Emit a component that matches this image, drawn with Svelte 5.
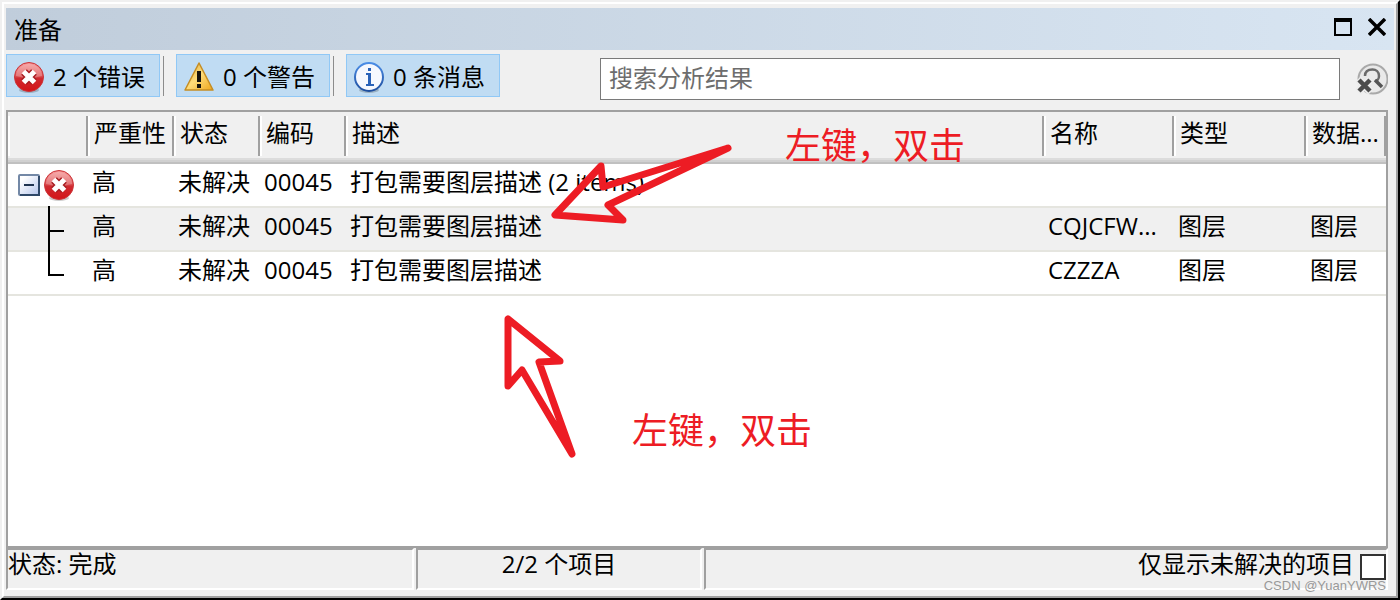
<script>
  let search = "";
  let onlyUnresolved = false;
  let expanded = true;

  const filters = [
    { icon: "error", label: "2 个错误" },
    { icon: "warning", label: "0 个警告" },
    { icon: "info", label: "0 条消息" }
  ];

  const columns = ["", "严重性", "状态", "编码", "描述", "名称", "类型", "数据..."];

  const group = { severity: "高", status: "未解决", code: "00045", text: "打包需要图层描述 (2 items)" };

  const items = [
    { severity: "高", status: "未解决", code: "00045", text: "打包需要图层描述", name: "CQJCFW...", type: "图层", data: "图层" },
    { severity: "高", status: "未解决", code: "00045", text: "打包需要图层描述", name: "CZZZA", type: "图层", data: "图层" }
  ];
</script>

{#snippet icon(name)}
  {#if name === "error"}
    <svg class="icon" viewBox="0 0 32 32" aria-hidden="true">
      <defs>
        <linearGradient id="red" x1="0" y1="0" x2="0" y2="1">
          <stop offset="0" stop-color="#f79a9a" />
          <stop offset="0.45" stop-color="#dd5558" />
          <stop offset="0.55" stop-color="#cf2a30" />
          <stop offset="1" stop-color="#d41418" />
        </linearGradient>
      </defs>
      <ellipse cx="16" cy="29" rx="10" ry="3" fill="#000" opacity="0.2" />
      <circle cx="16" cy="16" r="14.5" fill="url(#red)" stroke="#cc3438" />
      <path d="M3 15a13 12 0 0 1 26 0q-13 4-26 0z" fill="#fff" opacity="0.22" />
      <path d="M11 11l10 10M21 11L11 21" stroke="#a81d22" stroke-width="8" />
      <path d="M10.5 10.5l11 11M21.500 10.500l-11 11" stroke="#fff" stroke-width="5" />
    </svg>
  {:else if name === "warning"}
    <svg class="icon" viewBox="0 0 32 32" aria-hidden="true">
      <defs>
        <linearGradient id="gold" x1="0" y1="0" x2="1" y2="1">
          <stop offset="0" stop-color="#d8a83c" />
          <stop offset="0.5" stop-color="#ffdc79" />
          <stop offset="1" stop-color="#eda51b" />
        </linearGradient>
      </defs>
      <path d="M16 2L30 29H2z" fill="url(#gold)" stroke="#c58d24" stroke-width="1.5" stroke-linejoin="round" />
      <path d="M14 10h4v11h-4zM14 23h4v4h-4z" fill="#15120c" />
    </svg>
  {:else}
    <svg class="icon" viewBox="0 0 32 32" aria-hidden="true">
      <defs>
        <linearGradient id="blue" x1="0" y1="0" x2="0" y2="1">
          <stop offset="0" stop-color="#4b8de6" />
          <stop offset="1" stop-color="#1f4f9f" />
        </linearGradient>
      </defs>
      <ellipse cx="16" cy="29" rx="10" ry="3" fill="#000" opacity="0.2" />
      <circle cx="16" cy="16" r="14" fill="#f6f8fe" stroke="url(#blue)" stroke-width="2" />
      <path d="M15 7h3v3h-3zM13 12h5v11h3v2h-8v-2h2v-9h-2z" fill="#2a62b8" />
    </svg>
  {/if}
{/snippet}

<div class="frame">
  <div class="window">
    <header class="titlebar">
      <h1>准备</h1>
      <div class="controls">
        <button aria-label="最大化">
          <svg width="18" height="18" viewBox="0 0 18 18">
            <path d="M1 2V17H17V2" fill="none" stroke="#000" stroke-width="2" />
            <path d="M0 0h18v4H0z" />
          </svg>
        </button>
        <button aria-label="关闭">
          <svg width="18" height="18" viewBox="0 0 18 18">
            <path d="M1 1L17 17M17 1L1 17" stroke="#000" stroke-width="3.500" />
          </svg>
        </button>
      </div>
    </header>

    <div class="toolbar">
      <div class="filters">
        {#each filters as filter}
          <div class="slot">
            <button class="filter">
              {@render icon(filter.icon)}
              <span>{filter.label}</span>
            </button>
          </div>
        {/each}
      </div>
      <input class="search" type="text" placeholder="搜索分析结果" aria-label="搜索分析结果" bind:value={search} />
      <button class="clear" aria-label="清除搜索" on:click={() => (search = "")}>
        <svg width="32" height="34" viewBox="0 0 32 34">
          <circle cx="17" cy="16" r="14.500" fill="#e9e9e9" stroke="#a9a9a9" stroke-width="2" />
          <path d="M9 13c0-5 4-6.500 7.500-6.500S23 9 23 13c0 3-2 5-4 5" fill="none" stroke="#6b6b6b" stroke-width="2.500" />
          <path d="M19 17l7 7" stroke="#555" stroke-width="3.500" />
          <path d="M2 16l13 13M15 16L2 29" stroke="#ececec" stroke-width="8" />
          <path d="M3 17l11 11M14 17L3 28" stroke="#4b4b4b" stroke-width="4.500" />
        </svg>
      </button>
    </div>

    <main class="results">
      <table>
        <colgroup>
          <col class="c-tree" />
          <col class="c-short" />
          <col class="c-short" />
          <col class="c-short" />
          <col />
          <col class="c-name" />
          <col class="c-type" />
          <col class="c-tree" />
        </colgroup>
        <thead>
          <tr>
            {#each columns as column}
              <th><div class="head">{column}</div></th>
            {/each}
          </tr>
        </thead>
        <tbody>
          <tr>
            <td class="tree">
              <div class="node">
                <button class="toggle" aria-label="展开或折叠" on:click={() => (expanded = !expanded)}>
                  <svg width="22" height="22" viewBox="0 0 22 22">
                    <defs>
                      <linearGradient id="box" x1="0" y1="0" x2="1" y2="1">
                        <stop offset="0.2" stop-color="#fff" />
                        <stop offset="1" stop-color="#b4c4ea" />
                      </linearGradient>
                    </defs>
                    <rect x="1" y="1" width="20" height="20" rx="1" fill="url(#box)" stroke="#7388a6" stroke-width="2" />
                    <path d="M21 2V21H2" fill="none" stroke="#2f4868" stroke-width="2" />
                    <path d={expanded ? "M6 11h10" : "M6 11h10M11 6v10"} stroke="#1f3350" stroke-width="2" />
                  </svg>
                </button>
                {@render icon("error")}
              </div>
            </td>
            <td>{group.severity}</td>
            <td>{group.status}</td>
            <td>{group.code}</td>
            <td>{group.text}</td>
            <td></td>
            <td></td>
            <td></td>
          </tr>
          {#if expanded}
            {#each items as item, i}
              <tr class:shaded={i % 2 === 0}>
                <td class="tree">
                  <svg class="branch" width="80" height="42" viewBox="0 0 80 42" aria-hidden="true">
                    <path d={i === items.length - 1 ? "M41 -2V23H56" : "M41 -2V42M41 23H56"} />
                  </svg>
                </td>
                <td>{item.severity}</td>
                <td>{item.status}</td>
                <td>{item.code}</td>
                <td>{item.text}</td>
                <td>{item.name}</td>
                <td>{item.type}</td>
                <td>{item.data}</td>
              </tr>
            {/each}
          {/if}
        </tbody>
      </table>

      <!-- hand-drawn notes over the list -->
      <svg class="arrow first" width="184" height="84" viewBox="0 0 184 84" aria-hidden="true">
        <path d="M178 8L53 47L51 26L5 75L73 80L58 65Z" />
      </svg>
      <span class="note first">左键，双击</span>
      <svg class="arrow second" width="74" height="146" viewBox="0 0 74 146" aria-hidden="true">
        <path d="M8 5V72L22 56L72 140L39 48L60 47Z" />
      </svg>
      <span class="note second">左键，双击</span>
    </main>

    <footer class="statusbar">
      <div class="panel state">状态: 完成</div>
      <div class="panel count">2/2 个项目</div>
      <div class="panel option">
        <label for="unresolved">仅显示未解决的项目</label>
        <input id="unresolved" type="checkbox" bind:checked={onlyUnresolved} />
        <span class="watermark">CSDN @YuanYWRS</span>
      </div>
    </footer>
  </div>
</div>

<style>
  :global(body) {
    background: #f0f0f0;
  }

  .frame {
    height: 100vh;
    box-sizing: border-box;
    border: 2px solid #000;
    border-top-color: #f0f0f0;
    border-left-color: #f0f0f0;
    font-family: "Open Sans", "Noto Sans CJK SC", sans-serif;
    font-size: 24px;
    line-height: 32px;
    color: #000;
  }

  .window {
    height: 100%;
    box-sizing: border-box;
    display: flex;
    flex-direction: column;
    background: #f0f0f0;
    border: 2px solid #a0a0a0;
    border-top-color: #fff;
    border-left-color: #fff;
    padding: 4px 2px 6px;
  }

  button {
    font: inherit;
    color: inherit;
    background: none;
    border: 0;
    padding: 0;
  }

  svg {
    display: block;
    flex: none;
  }

  .icon {
    width: 32px;
    height: 32px;
  }

  .titlebar {
    display: flex;
    align-items: center;
    justify-content: space-between;
    height: 42px;
    padding: 0 8px;
    background: linear-gradient(90deg, #c0cddb, #d8e5f2);
  }

  h1 {
    margin: 0;
    padding-top: 2px;
    font-size: 24px;
    font-weight: 400;
  }

  .controls {
    display: flex;
    gap: 16px;
    padding-bottom: 4px;
  }

  .toolbar {
    display: flex;
    align-items: flex-start;
    height: 60px;
    box-sizing: border-box;
    padding: 4px 6px 0 0;
  }

  .filters {
    display: flex;
    gap: 12px;
    margin-right: 100px;
  }

  .slot:not(:last-child) {
    padding-right: 4px;
    background: linear-gradient(#8c8c8c, #8c8c8c) right / 1px 40px no-repeat;
  }

  .filter {
    display: flex;
    align-items: center;
    gap: 8px;
    width: 154px;
    height: 43px;
    box-sizing: border-box;
    padding: 2px 6px 0;
    background: #c0dcf3;
    border: 1px solid #90c8f6;
    white-space: nowrap;
  }

  .search {
    flex: 1;
    min-width: 0;
    height: 42px;
    box-sizing: border-box;
    margin-top: 4px;
    padding: 0 8px 4px;
    border: 1px solid #7a7a7a;
    background: #fff;
    font: inherit;
  }

  .search::placeholder {
    color: #6d6d6d;
    opacity: 1;
  }

  .clear {
    margin: 9px 0 0 16px;
  }

  .results {
    position: relative;
    flex: 1;
    min-height: 0;
    margin-right: 6px;
    border: 2px solid #a0a0a0;
    background: #fff;
  }

  table {
    width: 100%;
    table-layout: fixed;
    border-collapse: separate;
    border-spacing: 0;
  }

  .c-tree {
    width: 80px;
  }

  .c-short {
    width: 86px;
  }

  .c-name {
    width: 130px;
  }

  .c-type {
    width: 132px;
  }

  th {
    height: 52px;
    box-sizing: border-box;
    padding: 4px 0 8px;
    font-weight: 400;
    text-align: left;
    background: linear-gradient(#f0f0f0 46px, #dcdcdc 46px 48px, #d0d0d0 48px 50px, #c0c0c0 50px);
  }

  .head {
    height: 40px;
    box-sizing: border-box;
    padding: 1px 0 0 4px;
    border-left: 2px solid #fff;
    border-right: 2px solid #a0a0a0;
    white-space: nowrap;
  }

  td {
    height: 44px;
    box-sizing: border-box;
    padding: 0 0 6px 4px;
    border-bottom: 2px solid #e5e5df;
    white-space: nowrap;
  }

  .tree {
    padding: 0;
  }

  .shaded {
    background: #f0f0f0;
  }

  .node {
    display: flex;
    align-items: center;
    gap: 3px;
    padding-left: 10px;
  }

  .branch {
    overflow: visible;
  }

  .branch path {
    fill: none;
    stroke: #000;
    stroke-width: 2;
  }

  .arrow,
  .note {
    position: absolute;
    pointer-events: none;
  }

  .arrow {
    overflow: visible;
  }

  .arrow path {
    fill: none;
    stroke: #ed1c24;
    stroke-width: 7;
    stroke-linejoin: round;
  }

  .arrow.first {
    left: 542px;
    top: 28px;
  }

  .arrow.second {
    left: 492px;
    top: 202px;
  }

  .note {
    font-family: "Noto Sans CJK SC", sans-serif;
    font-size: 36px;
    line-height: 40px;
    color: #ed1c24;
    white-space: nowrap;
  }

  .note.first {
    left: 777px;
    top: 11px;
  }

  .note.second {
    left: 624px;
    top: 296px;
  }

  .statusbar {
    display: flex;
    gap: 2px;
    height: 42px;
    margin-right: 6px;
  }

  .panel {
    box-sizing: border-box;
    border: 2px solid #a0a0a0;
    border-right-color: #fff;
    border-bottom-color: #fff;
    line-height: 28px;
    white-space: nowrap;
  }

  .state {
    width: 408px;
  }

  .count {
    width: 286px;
    text-align: center;
  }

  .option {
    position: relative;
    flex: 1;
    display: flex;
    justify-content: flex-end;
    gap: 6px;
  }

  .option input {
    appearance: none;
    width: 26px;
    height: 26px;
    box-sizing: border-box;
    margin: 4px 0 0;
    border: 2px solid #333;
    background: #fff;
  }

  .option input:checked {
    box-shadow: inset 0 0 0 4px #fff;
    background: #333;
  }

  .watermark {
    position: absolute;
    right: 0;
    bottom: -6px;
    font-family: "Liberation Sans", sans-serif;
    font-size: 13px;
    line-height: 16px;
    color: #999;
  }
</style>
